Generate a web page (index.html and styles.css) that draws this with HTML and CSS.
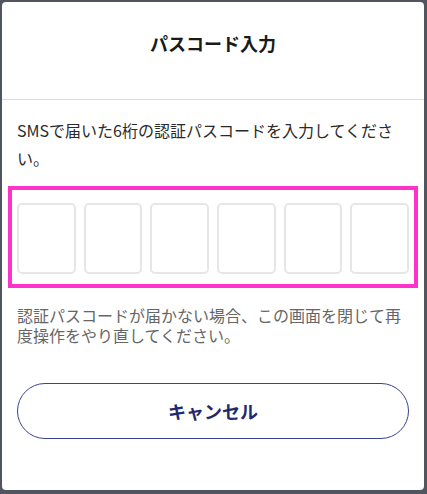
FILE: index.html
```html
<!DOCTYPE html>
<html lang="ja">
<head>
<meta charset="utf-8">
<title>パスコード入力</title>
<link rel="stylesheet" href="styles.css">
</head>
<body>
<div class="modal">
  <header class="modal-header">
    <h1 class="modal-title">パスコード入力</h1>
  </header>
  <div class="modal-body">
    <p class="lead">SMSで届いた6桁の認証パスコードを入力してください。</p>
    <div class="code-frame">
      <div class="code-row">
        <input class="code-box" type="text" maxlength="1" inputmode="numeric">
        <input class="code-box" type="text" maxlength="1" inputmode="numeric">
        <input class="code-box" type="text" maxlength="1" inputmode="numeric">
        <input class="code-box" type="text" maxlength="1" inputmode="numeric">
        <input class="code-box" type="text" maxlength="1" inputmode="numeric">
        <input class="code-box" type="text" maxlength="1" inputmode="numeric">
      </div>
    </div>
    <p class="note">認証パスコードが届かない場合、この画面を閉じて再度操作をやり直してください。</p>
    <button class="cancel-btn" type="button">キャンセル</button>
  </div>
</div>
</body>
</html>
```

FILE: styles.css
```css
html, body {
  margin: 0;
  padding: 0;
}
body {
  background: #50555f;
  width: 427px;
  height: 494px;
  overflow: hidden;
  font-family: "Noto Sans CJK JP", "Noto Sans", sans-serif;
}
.modal {
  margin: 2px 0 0 2px;
  width: 422px;
  height: 488px;
  background: #fff;
  border-radius: 4px;
  box-sizing: border-box;
}
.modal-header {
  height: 98px;
  box-sizing: border-box;
  padding-top: 29px;
  border-bottom: 1px solid #dcdcdc;
}
.modal-title {
  margin: 0;
  text-align: center;
  font-size: 18px;
  line-height: 24px;
  font-weight: 700;
  color: #1a1a1a;
}
.modal-body {
  padding: 16px 15px 0;
}
.lead {
  margin: 0;
  font-size: 16px;
  line-height: 28px;
  color: #2a2a2a;
}
.code-frame {
  margin: 14px -9px 0;
  border: 4px solid #ff33cc;
  padding: 13px 5px 10px;
}
.code-row {
  display: grid;
  grid-template-columns: repeat(6, 1fr);
  gap: 8px;
}
.code-box {
  height: 71px;
  width: 100%;
  box-sizing: border-box;
  border: 2px solid #e6e6e6;
  border-radius: 5px;
  background: #fff;
  margin: 0;
  padding: 0;
  outline: none;
}
.note {
  margin: 17px 0 0;
  font-size: 16px;
  line-height: 20px;
  color: #666;
}
.cancel-btn {
  display: block;
  margin-top: 38px;
  width: 100%;
  height: 56px;
  border: 1px solid #3b4290;
  border-radius: 28px;
  background: #fff;
  color: #1f2a6b;
  font-family: "Noto Sans CJK JP", "Noto Sans", sans-serif;
  font-size: 18px;
  font-weight: 700;
  cursor: pointer;
}
```
